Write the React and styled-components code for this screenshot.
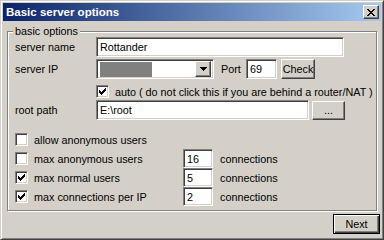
import styled, { createGlobalStyle } from 'styled-components';

const GlobalStyle = createGlobalStyle`
  html, body {
    margin: 0;
    padding: 0;
    background: #d4d0c8;
  }
  body {
    font-family: "Liberation Sans", Arial, sans-serif;
    font-size: 10.8px;
    color: #000;
  }
`;

// Styled Components
const Window = styled.div`
  box-sizing: border-box;
  width: 384px;
  height: 240px;
  display: flex;
  flex-direction: column;
  padding: 2px;
  background: #d4d0c8;
  border: 1px solid;
  border-color: #d4d0c8 #404040 #404040 #d4d0c8;
  box-shadow: inset 1px 1px #fff, inset -1px -1px #808080;
`;

const TitleBar = styled.div`
  height: 18px;
  flex: none;
  display: flex;
  align-items: center;
  justify-content: space-between;
  padding: 0 2px 0 3px;
  background: linear-gradient(to right, #0a246a, #a6caf0);
`;

const Title = styled.span`
  color: #fff;
  font-weight: bold;
  font-size: 11.5px;
`;

const Raised = styled.button`
  box-sizing: border-box;
  display: flex;
  align-items: center;
  justify-content: center;
  padding: 0;
  margin: 0 0 0 ${(p) => p.$ml || 0}px;
  font: inherit;
  color: #000;
  background: #d4d0c8;
  border: 1px solid;
  border-color: #fff #404040 #404040 #fff;
  box-shadow: inset -1px -1px #808080, inset 1px 1px #d4d0c8;
  width: ${(p) => p.$w}px;
  height: ${(p) => p.$h || 20}px;
  flex: none;
`;

const DefaultButton = styled(Raised)`
  border: 1px solid #000;
  box-shadow: inset 1px 1px #fff, inset -1px -1px #404040, inset -2px -2px #808080;
`;

const Body = styled.div`
  flex: 1;
  display: flex;
  flex-direction: column;
  padding: 4px 4px 0;
`;

const Group = styled.fieldset`
  margin: 0;
  padding: 0 7px 4px;
  min-width: 0;
  display: flex;
  flex-direction: column;
  border: 1px solid #808080;
  box-shadow: 1px 1px #fff, inset 1px 1px #fff;
`;

const Legend = styled.legend`
  padding: 0 2px;
  margin-left: -2px;
  line-height: 12px;
  background: #d4d0c8;
`;

const FieldRow = styled.div`
  display: flex;
  align-items: center;
  height: ${(p) => p.$h || 20}px;
  margin-top: ${(p) => p.$mt || 0}px;
  gap: ${(p) => p.$gap || 0}px;
`;

const Label = styled.span`
  width: ${(p) => p.$w}px;
  margin-left: ${(p) => p.$ml || 0}px;
  flex: none;
  white-space: nowrap;
`;

const Sunken = styled.div`
  box-sizing: border-box;
  width: ${(p) => p.$w}px;
  height: ${(p) => p.$h || 20}px;
  flex: none;
  display: flex;
  align-items: center;
  background: #fff;
  border: 1px solid;
  border-color: #808080 #fff #fff #808080;
  box-shadow: inset 1px 1px #404040, inset -1px -1px #d4d0c8;
`;

const TextInput = styled.input`
  box-sizing: border-box;
  width: 100%;
  height: 100%;
  border: 0;
  outline: 0;
  background: transparent;
  font: inherit;
  color: #000;
  padding: 0 3px;
`;

const Combo = styled(Sunken)`
  padding: 2px;
  justify-content: space-between;
`;

const Hidden = styled.span`
  width: 52px;
  height: 15px;
  margin-left: 1px;
  background: #808080;
`;

const Box = styled.span`
  box-sizing: border-box;
  width: 13px;
  height: 13px;
  flex: none;
  display: flex;
  align-items: center;
  justify-content: center;
  background: #fff;
  border: 1px solid;
  border-color: #808080 #fff #fff #808080;
  box-shadow: inset 1px 1px #404040, inset -1px -1px #d4d0c8;
`;

const CheckLabel = styled.label`
  display: flex;
  align-items: center;
  gap: 6px;
  white-space: nowrap;
  width: ${(p) => (p.$w ? `${p.$w}px` : 'auto')};
  flex: none;
`;

const Spacer = styled.div`
  width: ${(p) => p.$w}px;
  flex: none;
`;

const Limit = styled.div`
  display: flex;
  align-items: center;
  gap: 7px;
`;

const Footer = styled.div`
  display: flex;
  justify-content: flex-end;
  padding: 3px 0 0;
  margin-right: -3px;
`;

// Pixel glyphs
const Pixels = ({ w, h, rects }) => (
  <svg width={w} height={h} viewBox={`0 0 ${w} ${h}`} shapeRendering="crispEdges">
    {rects.map(([x, y, rw, rh], i) => (
      <rect key={i} x={x} y={y} width={rw} height={rh} fill="#000" />
    ))}
  </svg>
);

const tick = [
  [0, 2, 1, 3],
  [1, 3, 1, 3],
  [2, 4, 1, 3],
  [3, 3, 1, 3],
  [4, 2, 1, 3],
  [5, 1, 1, 3],
  [6, 0, 1, 3],
];

const cross = [
  [0, 0, 2, 1], [6, 0, 2, 1],
  [1, 1, 2, 1], [5, 1, 2, 1],
  [2, 2, 4, 1],
  [3, 3, 2, 1],
  [2, 4, 4, 1],
  [1, 5, 2, 1], [5, 5, 2, 1],
  [0, 6, 2, 1], [6, 6, 2, 1],
];

const arrow = [
  [0, 0, 7, 1],
  [1, 1, 5, 1],
  [2, 2, 3, 1],
  [3, 3, 1, 1],
];

const Check = ({ checked }) => (
  <Box>{checked && <Pixels w={7} h={7} rects={tick} />}</Box>
);

const limits = [
  { label: 'allow anonymous users', checked: false },
  { label: 'max anonymous users', checked: false, value: '16' },
  { label: 'max normal users', checked: true, value: '5' },
  { label: 'max connections per IP', checked: true, value: '2' },
];

const App = () => {
  return (
    <>
      <GlobalStyle />
      <Window>
        <TitleBar>
          <Title>Basic server options</Title>
          <Raised $w={16} $h={14}>
            <Pixels w={8} h={7} rects={cross} />
          </Raised>
        </TitleBar>

        <Body>
          <Group>
            <Legend>basic options</Legend>

            <FieldRow>
              <Label $w={81}>server name</Label>
              <Sunken $w={248}>
                <TextInput defaultValue='Rottander' readOnly />
              </Sunken>
            </FieldRow>

            <FieldRow $mt={2}>
              <Label $w={81}>server IP</Label>
              <Combo $w={118}>
                <Hidden />
                <Raised $w={16} $h={16}>
                  <Pixels w={7} h={4} rects={arrow} />
                </Raised>
              </Combo>
              <Label $w={25} $ml={7}>Port</Label>
              <Sunken $w={31}>
                <TextInput defaultValue='69' readOnly />
              </Sunken>
              <Raised $w={34} $ml={4}>Check</Raised>
            </FieldRow>

            <FieldRow $mt={6} $h={13}>
              <Spacer $w={81} />
              <CheckLabel>
                <Check checked />
                auto ( do not click this if you are behind a router/NAT )
              </CheckLabel>
            </FieldRow>

            <FieldRow $mt={2} $gap={3}>
              <Label $w={78}>root path</Label>
              <Sunken $w={213}>
                <TextInput defaultValue='E:\root' readOnly />
              </Sunken>
              <Raised $w={33} $h={19}>...</Raised>
            </FieldRow>

            {limits.map(({ label, checked, value }, i) => (
              <FieldRow key={label} $mt={i === 0 ? 10 : 0} $h={19}>
                <CheckLabel $w={168}>
                  <Check checked={checked} />
                  {label}
                </CheckLabel>
                {value && (
                  <Limit>
                    <Sunken $w={30} $h={19}>
                      <TextInput defaultValue={value} readOnly />
                    </Sunken>
                    <span>connections</span>
                  </Limit>
                )}
              </FieldRow>
            ))}
          </Group>

          <Footer>
            <DefaultButton $w={47}>Next</DefaultButton>
          </Footer>
        </Body>
      </Window>
    </>
  );
};

export default App;
